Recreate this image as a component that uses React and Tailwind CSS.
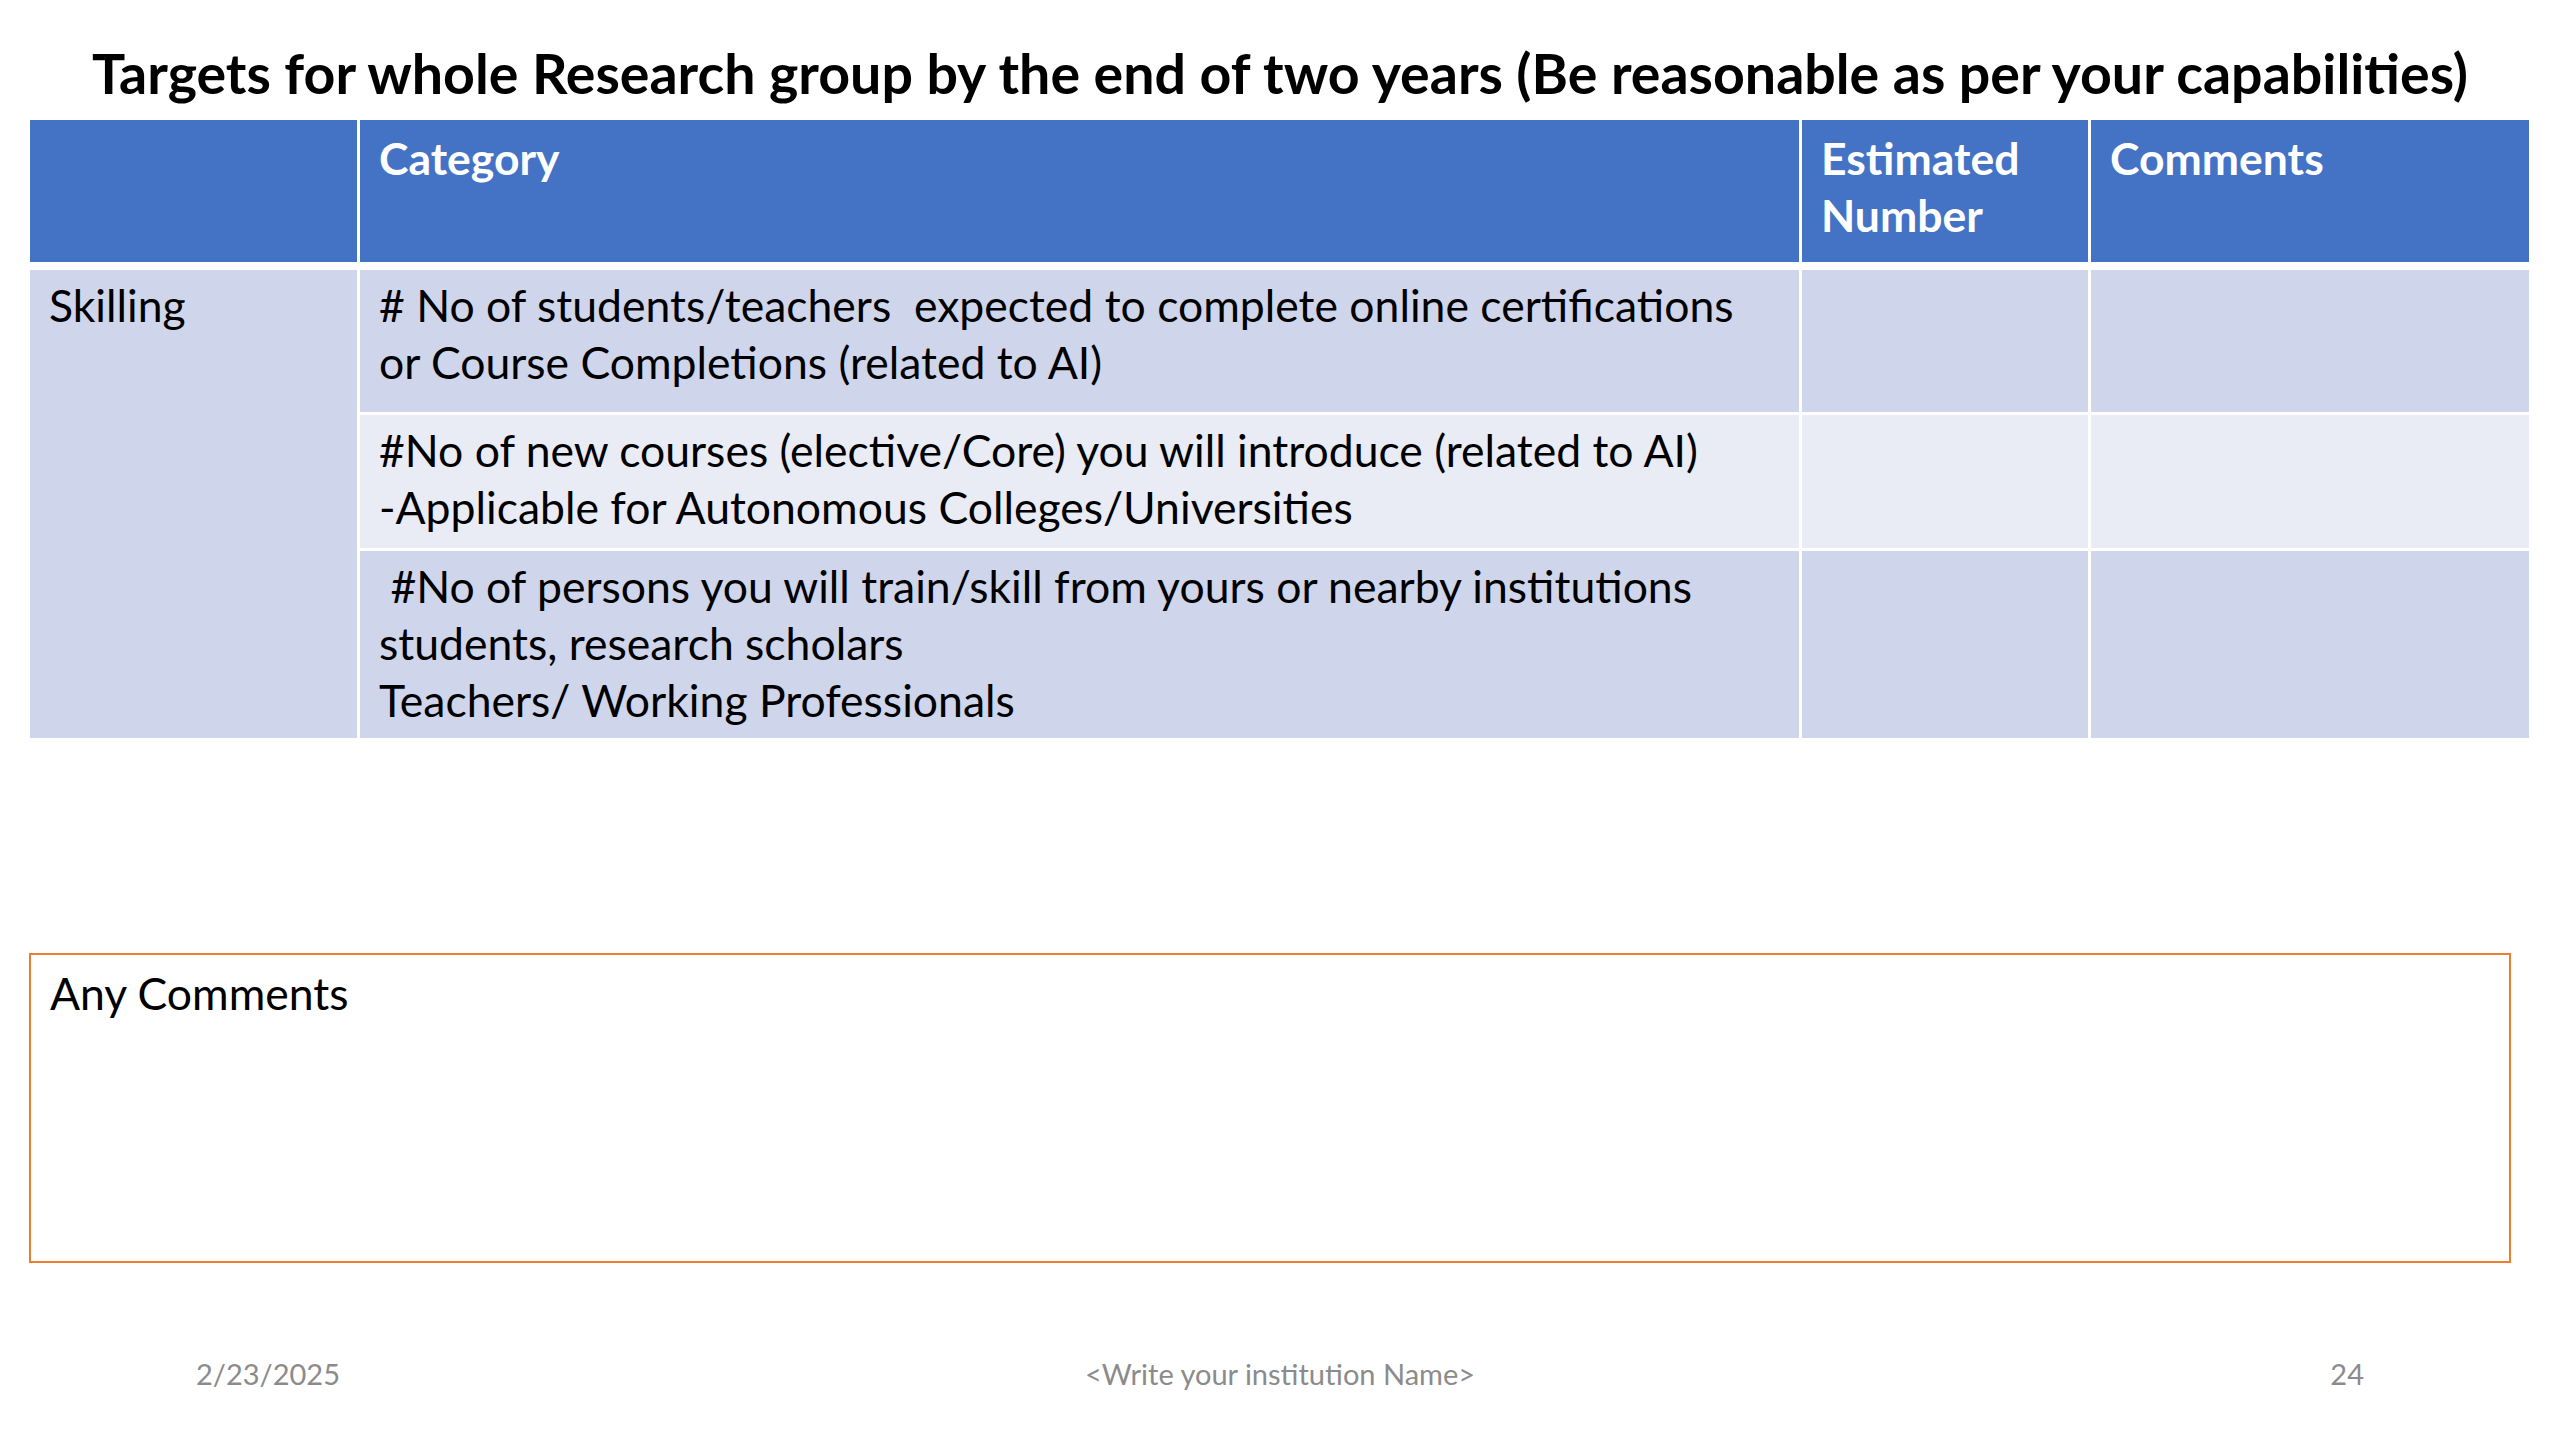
import React from 'react';

const font = { fontFamily: 'Lato, "Open Sans", sans-serif' };

function HeadCell({ children }) {
  return (
    <div className="bg-[#4472C4] text-white font-bold text-[44.5px] leading-[57px] pl-[19px] pt-[9px]">
      {children}
    </div>
  );
}

function BodyCell({ light, span, children }) {
  return (
    <div className={`${light ? 'bg-[#E9EBF5]' : 'bg-[#CFD5EA]'} ${span ? 'row-span-3' : ''} text-black text-[44.5px] leading-[57px] pl-[19px] pt-[6px] whitespace-pre`}>
      {children}
    </div>
  );
}

export default function App() {
  return (
    <div className="w-[2560px] h-[1440px] bg-white flex flex-col" style={font}>
      {/* slide title */}
      <h1 className="pt-[42px] text-center text-[55.5px] leading-[62px] font-bold text-black">
        Targets for whole Research group by the end of two years (Be reasonable as per your capabilities)
      </h1>

      {/* table */}
      <div className="mt-[16px] ml-[30px] w-[2499px]">
        <div className="grid grid-cols-[327px_1439px_286px_438px] gap-x-[3px] h-[142px]">
          <HeadCell />
          <HeadCell>Category</HeadCell>
          <HeadCell>Estimated<br />Number</HeadCell>
          <HeadCell>Comments</HeadCell>
        </div>
        <div className="mt-[8px] grid grid-cols-[327px_1439px_286px_438px] grid-rows-[142px_133px_187px] gap-x-[3px] gap-y-[3px]">
          <BodyCell span>Skilling</BodyCell>
          <BodyCell>{'# No of students/teachers  expected to complete online certifications\nor Course Completions (related to AI)'}</BodyCell>
          <BodyCell />
          <BodyCell />
          <BodyCell light>{'#No of new courses (elective/Core) you will introduce (related to AI)\n-Applicable for Autonomous Colleges/Universities'}</BodyCell>
          <BodyCell light />
          <BodyCell light />
          <BodyCell>{' #No of persons you will train/skill from yours or nearby institutions\nstudents, research scholars\nTeachers/ Working Professionals'}</BodyCell>
          <BodyCell />
          <BodyCell />
        </div>
      </div>

      {/* comments box */}
      <div className="mt-[215px] ml-[29px] w-[2482px] h-[310px] border-2 border-[#ED7D31] pl-[19px] pt-[9px] text-[44.5px] leading-[57px] text-black">
        Any Comments
      </div>

      {/* footer */}
      <div className="mt-[92px] px-[196px] grid grid-cols-3 text-[29px] leading-[38px] text-[#8B8B8B]">
        <div className="text-left">2/23/2025</div>
        <div className="text-center">&lt;Write your institution Name&gt;</div>
        <div className="text-right">24</div>
      </div>
    </div>
  );
}
